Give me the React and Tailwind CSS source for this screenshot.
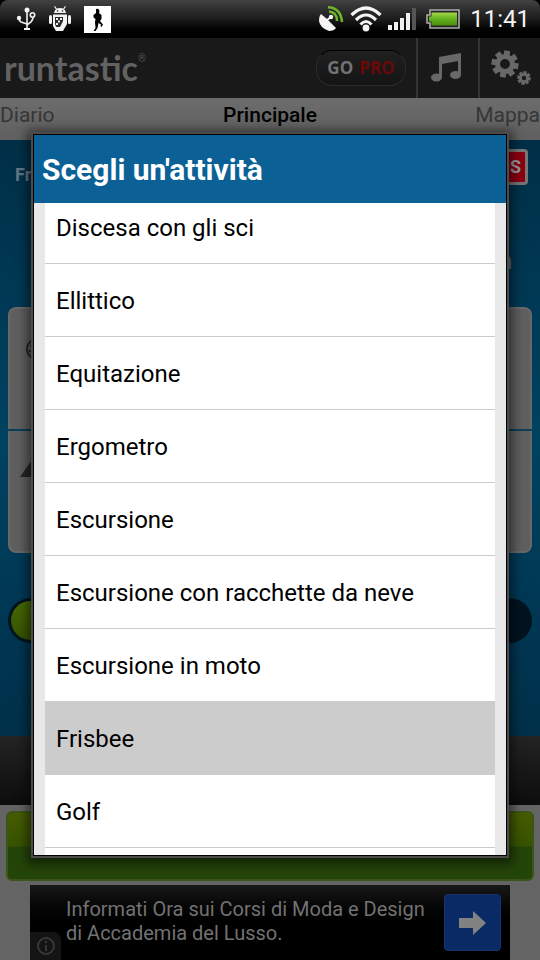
const ACTIVITIES = [
  'Discesa con gli sci',
  'Ellittico',
  'Equitazione',
  'Ergometro',
  'Escursione',
  'Escursione con racchette da neve',
  'Escursione in moto',
  'Frisbee',
  'Golf',
]

function UsbIcon() {
  return (
    <svg width="20" height="24" viewBox="0 0 20 24" fill="none" stroke="#f2f2f2" strokeWidth="1.6">
      <path d="M11 3V21M11 17L5 15Q3 14 3 11M11 18L15 15Q17 13 17 10" />
      <circle cx="11" cy="3" r="2.5" fill="#f2f2f2" stroke="none" />
      <circle cx="3" cy="11" r="2.2" fill="#f2f2f2" stroke="none" />
      <circle cx="16.500" cy="8" r="2.2" />
      <path d="M8 22H14" strokeWidth="2" />
    </svg>
  )
}

function AndroidDebugIcon() {
  return (
    <svg width="24" height="26" viewBox="0 0 24 26" fill="#f2f2f2">
      <path d="M6 7Q7 2 12 2T18 7ZM7 0L9 3L8 3.500L6 .5ZM17 0L15 3L16 3.500L18 .5Z" />
      <rect x="1" y="9" width="3" height="9" rx="1.500" />
      <rect x="20" y="9" width="3" height="9" rx="1.500" />
      <path d="M5 8.500H19V18L15 25H8L5 20Z" />
      <path d="M7 11H15V15L12 21L8 21L7 18Z" fill="#2a2a2a" />
      <g>
        <rect x="8" y="12" width="2" height="2" /><rect x="12" y="12" width="2" height="2" />
        <rect x="10" y="14.500" width="2" height="2" /><rect x="8" y="17" width="2" height="2" />
      </g>
      <circle cx="9.500" cy="5" r=".8" fill="#222" />
      <circle cx="14.500" cy="5" r=".8" fill="#222" />
    </svg>
  )
}

function RunnerIcon() {
  return (
    <svg width="27" height="27" viewBox="0 0 27 27">
      <rect width="27" height="27" fill="#fff" />
      <path
        d="M12 3Q15 2 15.500 5L15 7L17.500 9V13L16 15L19 18.500L17.500 21L16.500 20L17 18.500L14.500 17L13.500 22L11.500 25H9.500L11.500 22L11 16L11.500 13L9.500 11.500L9.500 9L12 7Z"
        fill="#000"
      />
    </svg>
  )
}

function SatelliteIcon() {
  return (
    <svg width="26" height="26" viewBox="0 0 26 26" fill="none">
      <path d="M3 8L9 13L13 17L18 22Q16 25 11 25Q2 22 1 15Q1 10 3 8Z" fill="#f4f4f4" />
      <path d="M9 14L13 11" stroke="#f4f4f4" strokeWidth="2" />
      <circle cx="13" cy="11" r="2.200" fill="#f4f4f4" />
      <path d="M11 5.500Q19 6 19 15M10 1.200Q23 2 24 16" stroke="#6cb52d" strokeWidth="2.600" />
    </svg>
  )
}

function WifiIcon() {
  return (
    <svg width="32" height="26" viewBox="0 0 32 26" fill="none" stroke="#f4f4f4" strokeWidth="3.200">
      <path d="M1.500 9Q16 -5 30.500 9M6 14Q16 4 26 14M10.500 18.500Q16 12.500 21.500 18.500" />
      <circle cx="16" cy="22" r="3.400" fill="#f4f4f4" stroke="none" />
    </svg>
  )
}

function SignalIcon() {
  return (
    <svg width="28" height="24" viewBox="0 0 28 24" fill="#f0f0f0">
      <rect x="0" y="18" width="4" height="5" />
      <rect x="6" y="15" width="4" height="8" />
      <rect x="12" y="11" width="4" height="12" />
      <rect x="18" y="6" width="4" height="17" />
      <rect x="24" y="1" width="4" height="22" fill="#555" />
    </svg>
  )
}

function BatteryIcon() {
  return (
    <svg width="34" height="20" viewBox="0 0 34 20">
      <defs>
        <linearGradient id="charge" x1="0" y1="0" x2="0" y2="1">
          <stop offset="0" stopColor="#a5da4c" />
          <stop offset=".5" stopColor="#63b01c" />
          <stop offset="1" stopColor="#4c8f10" />
        </linearGradient>
      </defs>
      <path d="M4 1H33V19H4V14H1V6H4Z" fill="#222" stroke="#aaa" strokeWidth="1.600" />
      <path d="M5.500 3.500H31V16.500H5.500V12.500H3V7.500H5.500Z" fill="url(#charge)" />
    </svg>
  )
}

function StatusBar() {
  return (
    <div className="shrink-0 bg-black">
      <div className="flex h-[38px] items-center justify-between rounded-t-lg bg-linear-to-b from-[#424242] via-[#1c1c1c] to-black pr-2.5 pl-4">
        <div className="flex items-center gap-3">
          <UsbIcon />
          <AndroidDebugIcon />
          <RunnerIcon />
        </div>
        <div className="flex items-center gap-1.5">
          <SatelliteIcon />
          <WifiIcon />
          <SignalIcon />
          <span className="ml-1"><BatteryIcon /></span>
          <span className="ml-1 text-2xl leading-8 text-[#f4f4f4]">11:41</span>
        </div>
      </div>
    </div>
  )
}

function NoteIcon() {
  return (
    <svg width="32" height="30" viewBox="0 0 32 30" fill="#686868">
      <path d="M9 4L31 0V22H28V8L12 11V25H9Z" />
      <ellipse cx="6.500" cy="24.500" rx="5.500" ry="4" />
      <ellipse cx="25.500" cy="22" rx="5.500" ry="4" />
    </svg>
  )
}

function GearShape({ cx, cy, r, tooth, width }) {
  return (
    <g transform={`translate(${cx} ${cy})`} stroke="#686868" fill="none">
      <circle r={r} strokeWidth={width} />
      {[10, 55, 100, 145, 190, 235, 280, 325].map((a) => (
        <path key={a} d={`M0 ${-r - width / 2 + 1}V${-r - width / 2 - tooth}`} strokeWidth={tooth * 1.7} transform={`rotate(${a})`} />
      ))}
    </g>
  )
}

function GearsIcon() {
  return (
    <svg width="42" height="36" viewBox="0 0 42 36">
      <GearShape cx={14} cy={14} r={7.5} tooth={3.5} width={5} />
      <GearShape cx={33} cy={28} r={3.5} tooth={2} width={2.600} />
    </svg>
  )
}

function AppHeader() {
  return (
    <header className="flex h-[60px] shrink-0 bg-[#191919]">
      <div className="flex flex-1 items-center pl-1">
        <span className="font-[Lato] text-[34px] leading-10 font-bold text-[#626262]">runtastic</span>
        <span className="mb-5 text-[10px] text-[#555]">®</span>
      </div>
      <button className="my-3 mr-2.5 flex w-[90px] items-center justify-center gap-1.5 rounded-2xl border border-[#2b2b2b] border-t-black bg-linear-to-b from-[#202020] to-[#151515] font-['Open_Sans'] text-[17px] font-bold text-[#737373]">
        GO <span className="text-[#6c0808]">PRO</span>
      </button>
      <button aria-label="Musica" className="flex w-[62px] items-center justify-center border-l-2 border-[#333] pr-1">
        <NoteIcon />
      </button>
      <button aria-label="Impostazioni" className="flex w-[62px] items-center justify-center border-l-2 border-[#333] pl-1">
        <GearsIcon />
      </button>
    </header>
  )
}

function Tabs() {
  return (
    <nav className="grid h-[42px] shrink-0 grid-cols-3 bg-linear-to-b from-[#6c6c6c] to-[#606060] pb-1.5 text-[21px] text-[#363636]">
      <button className="text-left">Diario</button>
      <button className="font-medium text-black">Principale</button>
      <button className="text-right">Mappa</button>
    </nav>
  )
}

function Dashboard() {
  return (
    <main className="flex flex-1 flex-col bg-linear-to-b from-[#002f47] via-[#004261] to-[#00304a] px-2 pt-2">
      <div className="flex h-[38px] items-center justify-between pr-1 pl-[7px]">
        <span className="pt-4 text-lg font-bold text-[#637784]">Fr</span>
        <span className="rounded border-3 border-[#777] bg-[#8c0011] px-1 text-lg leading-[30px] font-bold text-[#999]">PS</span>
      </div>
      <div className="flex h-[121px] items-end justify-end pr-5 pb-[30px] text-2xl font-bold text-[#637784]">n</div>
      <div className="h-[122px] rounded-t-lg border-2 border-b-0 border-[#686868] bg-[#5f5f5f] pt-7 pl-4">
        <svg width="22" height="24" viewBox="0 0 22 24" fill="none" stroke="#252525" strokeWidth="2">
          <circle cx="11" cy="12" r="10" />
          <path d="M4 9H8M3 14H8" />
        </svg>
      </div>
      <div className="h-0.5 bg-[#0b3e57]" />
      <div className="h-[122px] rounded-b-lg border-2 border-t-0 border-[#686868] bg-[#5f5f5f] pt-6 pl-2.5">
        <svg width="32" height="24" viewBox="0 0 32 24" fill="#252525">
          <path d="M0 22L14 2L28 22Z" />
        </svg>
      </div>
      <div className="mt-[45px] h-[45px] rounded-full bg-[#001420] p-[3px]">
        <div className="h-full w-1/2 rounded-full bg-linear-to-b from-[#486a00] to-[#355200]" />
      </div>
    </main>
  )
}

function AdBanner() {
  return (
    <a href="#ad" className="mx-[30px] flex h-[75px] items-end bg-linear-to-b from-[#181818] to-black to-70%">
      <span className="flex h-7 w-[31px] items-center justify-center rounded-tr-lg bg-[#141414]">
        <svg width="18" height="18" viewBox="0 0 18 18" fill="none" stroke="#383838" strokeWidth="2">
          <circle cx="9" cy="9" r="8" />
          <path d="M9 8V14M9 4V6" />
        </svg>
      </span>
      <span className="flex-1 self-center pb-1 pl-[5px] text-xl leading-6 text-[#727272]">
        Informati Ora sui Corsi di Moda e Design
        <br />
        di Accademia del Lusso.
      </span>
      <span className="mr-[9px] flex size-[57px] items-center justify-center self-center rounded-sm border border-[#16356f] bg-[#0a2a66]">
        <svg width="27" height="24" viewBox="0 0 27 24" fill="#828282">
          <path d="M0 7H14V0L27 12L14 24V17H0Z" />
        </svg>
      </span>
    </a>
  )
}

function ActivityDialog() {
  return (
    <section
      role="dialog"
      aria-labelledby="dialog-title"
      className="absolute inset-x-[31px] top-[132px] bottom-[102px] flex border-2 border-[#4b4b4b] shadow-[0_2px_10px_4px_rgba(0,0,0,0.5)]"
    >
      <div className="flex min-w-0 flex-1 flex-col border border-black bg-[#e8e8e8]">
        <h2 id="dialog-title" className="flex h-[68px] shrink-0 items-center bg-[#0b6196] px-2 text-[30px] font-bold text-white">
          Scegli un'attività
        </h2>
        <div className="mx-[11px] min-h-0 flex-1 overflow-hidden bg-white">
          <ul className="-mt-3">
            {ACTIVITIES.map((name) => (
              <li key={name} className="border-b border-[#ccc]">
                <button
                  className={`block h-[72px] w-full px-[11px] pt-0.5 text-left text-2xl text-black ${name === 'Frisbee' ? 'bg-[#ccc]' : 'bg-white'}`}
                >
                  {name}
                </button>
              </li>
            ))}
          </ul>
        </div>
      </div>
    </section>
  )
}

export default function App() {
  return (
    <div className="relative flex min-h-screen flex-col overflow-hidden bg-[#646464] font-[Roboto,sans-serif]">
      <StatusBar />
      <AppHeader />
      <Tabs />
      <Dashboard />
      <div className="h-[69px] shrink-0 bg-linear-to-b from-[#242424] to-[#0d0d0d]" />
      <div className="px-1.5 pt-1.5 pb-1">
        <button
          aria-label="Avvia"
          className="block h-[70px] w-full rounded-md border-2 border-[#3c5416] bg-linear-to-b from-[#465c00] from-0% via-[#375200] via-50% to-[#244509] to-52%"
        />
      </div>
      <AdBanner />
      <ActivityDialog />
    </div>
  )
}
